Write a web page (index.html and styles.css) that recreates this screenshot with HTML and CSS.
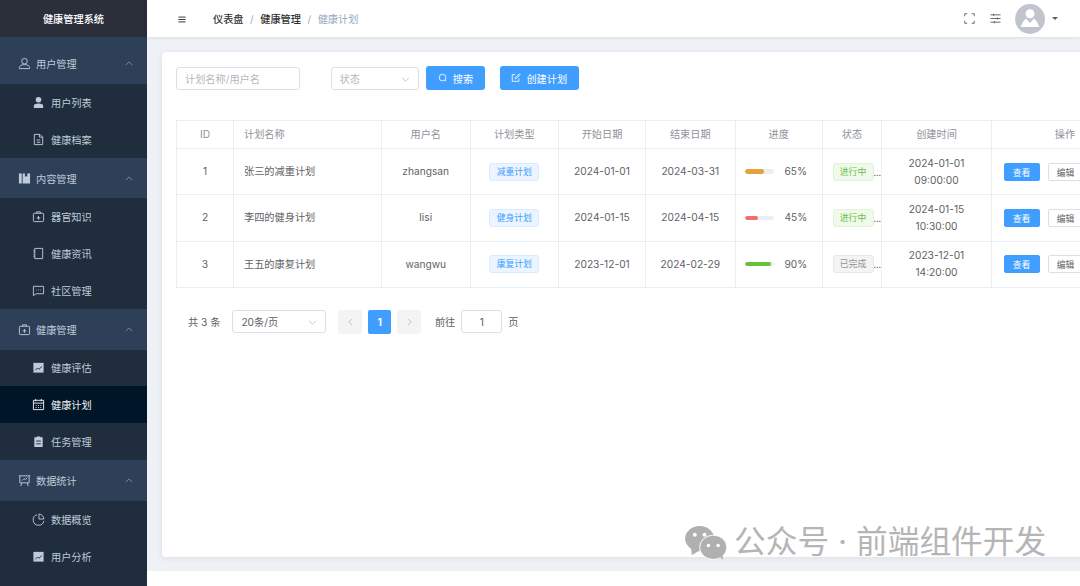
FILE: index.html
```html
<!DOCTYPE html>
<html lang="zh-CN">
<head>
<meta charset="utf-8">
<title>健康计划</title>
<link rel="stylesheet" href="styles.css">
</head>
<body>
<div class="app">
  <aside class="sidebar">
    <div class="brand">健康管理系统</div>
    <nav class="menu">
      <div class="group first">
        <svg class="ico" viewBox="0 0 14 14"><circle cx="7" cy="4.500" r="3"/><path d="M1.500 12.500v-1c0-2 2-3.300 5.500-3.300s5.500 1.300 5.500 3.300v1z"/></svg>
        <span class="label">用户管理</span>
        <svg class="caret" viewBox="0 0 10 6"><path d="M1 5l4-4 4 4"/></svg>
      </div>
      <a class="item"><svg class="ico solid" viewBox="0 0 14 14"><circle cx="7" cy="4" r="3"/><path d="M2 13v-2.500c0-1.500 1.500-2.500 5-2.500s5 1 5 2.500V13z"/></svg>用户列表</a>
      <a class="item"><svg class="ico" viewBox="0 0 14 14"><path d="M2.500 1.500h6l3 3v8h-9zM5 7.500h4M5 10h4M8 1.500v3h3.500"/></svg>健康档案</a>
      <div class="group">
        <svg class="ico solid" viewBox="0 0 14 14"><path d="M1 1.500h3v11H1zM5 1.500h8v11H5z"/><path class="cut" d="M7.500 1h2.500v4.500L8.750 4.300 7.500 5.500z"/></svg>
        <span class="label">内容管理</span>
        <svg class="caret" viewBox="0 0 10 6"><path d="M1 5l4-4 4 4"/></svg>
      </div>
      <a class="item"><svg class="ico" viewBox="0 0 14 14"><rect x="1.500" y="3.500" width="11" height="9" rx="1"/><path d="M5 3.500V2h4v1.500M7 6.500v4M5 8.500h4"/></svg>器官知识</a>
      <a class="item"><svg class="ico" viewBox="0 0 14 14"><path d="M3 1.500h8.500v11H3zM1.500 3.500H3M1.500 5.500H3M1.500 8.500H3M1.500 10.500H3"/></svg>健康资讯</a>
      <a class="item"><svg class="ico" viewBox="0 0 14 14"><path d="M1.500 2.500h11v8h-8l-3 2zM4.500 6.500h.8M6.700 6.500h.8M9 6.500h.8"/></svg>社区管理</a>
      <div class="group">
        <svg class="ico" viewBox="0 0 14 14"><rect x="1.500" y="3.500" width="11" height="9" rx="1"/><path d="M5 3.500V2h4v1.500M7 6.500v4M5 8.500h4"/></svg>
        <span class="label">健康管理</span>
        <svg class="caret" viewBox="0 0 10 6"><path d="M1 5l4-4 4 4"/></svg>
      </div>
      <a class="item"><svg class="ico chart" viewBox="0 0 14 14"><rect x="1.500" y="2" width="11" height="10.500"/><path class="cut-line" d="M3.500 10l2.500-2.500 1.500 1.500 3-3"/></svg>健康评估</a>
      <a class="item active"><svg class="ico" viewBox="0 0 14 14"><path d="M1.500 2.500h11v10h-11zM1.500 5.500h11M4 1v2.500M10 1v2.500M4 8h1M6.500 8h1M9 8h1M4 10.300h1M6.500 10.300h1M9 10.300h1"/></svg>健康计划</a>
      <a class="item"><svg class="ico solid" viewBox="0 0 14 14"><path d="M2.500 2.500h2.500V1.500h4v1h2.500V13h-9z"/><path class="cut-line" d="M4.500 6.500h5M4.500 9.500h5"/></svg>任务管理</a>
      <div class="group">
        <svg class="ico" viewBox="0 0 14 14"><path d="M.8 2h12.400M2 2v7.500h10V2M4 9.500L3 13M10 9.500l1 3.500M4.500 7l2-2 1.500 1 2-2"/></svg>
        <span class="label">数据统计</span>
        <svg class="caret" viewBox="0 0 10 6"><path d="M1 5l4-4 4 4"/></svg>
      </div>
      <a class="item"><svg class="ico" viewBox="0 0 14 14"><path d="M12.800 8.500A5.800 5.800 0 1 1 5.500 1.800M7.500 1.200A5.500 5.500 0 0 1 12.800 6.500H7.500z"/></svg>数据概览</a>
      <a class="item"><svg class="ico chart" viewBox="0 0 14 14"><rect x="1.500" y="2" width="11" height="10.500"/><path class="cut-line" d="M3.500 10l2.500-2.500 1.500 1.500 3-3"/></svg>用户分析</a>
    </nav>
  </aside>

  <div class="right">
    <header class="topbar">
      <svg class="hamburger" viewBox="0 0 10 8"><path d="M.5 1h9M.5 4h9M.5 7h9"/></svg>
      <div class="crumbs">
        <b>仪表盘</b><i>/</i><b>健康管理</b><i>/</i><span>健康计划</span>
      </div>
      <div class="tools">
        <svg class="tool" viewBox="0 0 12 12"><path d="M.8 3.500V.8h2.700M8.500.8h2.700v2.700M.8 8.500v2.700h2.700M11.200 8.500v2.700H8.500"/></svg>
        <svg class="tool" viewBox="0 0 12 12"><path d="M.5 2h11M.5 6h11M.5 10h11M4 .8v2.400M8 4.800v2.400M5 8.800v2.400"/></svg>
        <div class="avatar">
          <svg viewBox="0 0 30 30"><circle cx="15" cy="9.700" r="4.500"/><path d="M5.700 23C7 19 9 16 11 14.500L15 19l4-4.500c2 1.500 4 4.500 5.300 8.500z"/></svg>
        </div>
        <span class="drop"></span>
      </div>
    </header>

    <main class="main">
      <section class="card">
        <div class="filters">
          <div class="input name-input">计划名称/用户名</div>
          <div class="input status-select">状态
            <svg class="chev" viewBox="0 0 10 6"><path d="M1 1l4 4 4-4"/></svg>
          </div>
          <button class="btn search"><svg viewBox="0 0 12 12"><circle cx="5.500" cy="5.500" r="4"/><path d="M8.500 8.500l1.500 1.500"/></svg>搜索</button>
          <button class="btn create"><svg viewBox="0 0 12 12"><path d="M9.500 6.500v3.500h-8V2H5M5 7l.3-1.500L10 1l1 1-4.500 4.500z"/></svg>创建计划</button>
        </div>

        <table class="table">
          <colgroup>
            <col class="c-id"><col class="c-name"><col class="c-user"><col class="c-type"><col class="c-start"><col class="c-end"><col class="c-prog"><col class="c-status"><col class="c-time"><col class="c-op">
          </colgroup>
          <thead>
            <tr><th>ID</th><th class="left">计划名称</th><th>用户名</th><th>计划类型</th><th>开始日期</th><th>结束日期</th><th>进度</th><th>状态</th><th>创建时间</th><th>操作</th></tr>
          </thead>
          <tbody>
            <tr>
              <td>1</td><td class="left">张三的减重计划</td><td>zhangsan</td><td><span class="tag blue">减重计划</span></td><td>2024-01-01</td><td>2024-03-31</td>
              <td class="prog"><div class="pwrap"><div class="track"><div class="fill orange" style="width:65%"></div></div><span>65%</span></div></td>
              <td class="st"><span class="tag green">进行中</span><span class="more">...</span></td>
              <td>2024-01-01<br>09:00:00</td>
              <td class="ops"><button class="mini primary">查看</button><button class="mini">编辑</button></td>
            </tr>
            <tr>
              <td>2</td><td class="left">李四的健身计划</td><td>lisi</td><td><span class="tag blue">健身计划</span></td><td>2024-01-15</td><td>2024-04-15</td>
              <td class="prog"><div class="pwrap"><div class="track"><div class="fill red" style="width:45%"></div></div><span>45%</span></div></td>
              <td class="st"><span class="tag green">进行中</span><span class="more">...</span></td>
              <td>2024-01-15<br>10:30:00</td>
              <td class="ops"><button class="mini primary">查看</button><button class="mini">编辑</button></td>
            </tr>
            <tr>
              <td>3</td><td class="left">王五的康复计划</td><td>wangwu</td><td><span class="tag blue">康复计划</span></td><td>2023-12-01</td><td>2024-02-29</td>
              <td class="prog"><div class="pwrap"><div class="track"><div class="fill lime" style="width:90%"></div></div><span>90%</span></div></td>
              <td class="st"><span class="tag gray">已完成</span><span class="more">...</span></td>
              <td>2023-12-01<br>14:20:00</td>
              <td class="ops"><button class="mini primary">查看</button><button class="mini">编辑</button></td>
            </tr>
          </tbody>
        </table>

        <div class="pager">
          <span>共 3 条</span>
          <div class="input size-select">20条/页
            <svg class="chev" viewBox="0 0 10 6"><path d="M1 1l4 4 4-4"/></svg>
          </div>
          <div class="pages">
            <span class="page"><svg viewBox="0 0 6 10"><path d="M5 1L1 5l4 4"/></svg></span>
            <span class="page on">1</span>
            <span class="page"><svg viewBox="0 0 6 10"><path d="M1 1l4 4-4 4"/></svg></span>
          </div>
          <span class="goto">前往</span>
          <div class="input jump">1</div>
          <span>页</span>
        </div>
      </section>
    </main>
  </div>
</div>

<div class="watermark">
  <svg viewBox="0 0 44 36"><ellipse cx="16" cy="14" rx="15" ry="13"/><path d="M7 23l1 8 8-5z"/><ellipse class="wm-front" cx="30" cy="23" rx="14" ry="12.500"/><path d="M36 32l4 4-.5-7z"/><circle class="wm-eye" cx="11" cy="10" r="2"/><circle class="wm-eye" cx="21" cy="10" r="2"/><circle class="wm-eye" cx="25" cy="21" r="1.800"/><circle class="wm-eye" cx="35" cy="21" r="1.800"/></svg>
  <span>公众号 · 前端组件开发</span>
</div>
</body>
</html>
```
FILE: styles.css
```css
* { box-sizing: border-box; }
html, body { margin: 0; height: 100%; }
body {
  position: relative;
  overflow: hidden;
  background: #fff;
  font-family: Inter, "Noto Sans CJK SC", sans-serif;
  font-size: 10.2px;
  color: #606266;
}
.app { display: flex; height: 586px; }

/* sidebar */
.sidebar { width: 147px; flex: none; background: #1f2d3d; color: #bfcbd9; }
.brand {
  height: 37px;
  background: #2b2f3a;
  color: #fff;
  font-weight: 500;
  display: flex;
  align-items: center;
  justify-content: center;
}
.group {
  height: 40.500px;
  background: #2e4058;
  display: flex;
  align-items: center;
  padding: 0 14px 0 17.500px;
}
.group.first { height: 47px; padding-top: 6px; }
.group .ico { margin-right: 5.500px; }
.label { flex: 1; }
.item {
  height: 36.920px;
  display: flex;
  align-items: center;
  padding-left: 31.500px;
}
.item .ico { margin-right: 6.500px; }
.item.active { background: #001528; color: #f4f4f5; }
.ico {
  width: 13px;
  height: 13px;
  flex: none;
  fill: none;
  stroke: currentColor;
  stroke-width: 1;
}
.ico.solid { fill: currentColor; stroke: none; }
.ico.chart { fill: currentColor; stroke: none; }
.ico .cut { fill: #2e4058; }
.ico .cut-line { fill: none; stroke: #1f2d3d; stroke-width: 1; }
.caret {
  width: 8px;
  height: 5px;
  fill: none;
  stroke: #8a97a8;
  stroke-width: 1;
}

/* top bar */
.right { flex: 1; min-width: 0; display: flex; flex-direction: column; }
.topbar {
  height: 37px;
  flex: none;
  background: #fff;
  display: flex;
  align-items: center;
  padding-left: 31px;
  box-shadow: 0 1px 3px rgba(0, 21, 41, .08);
  position: relative;
}
.hamburger { width: 8px; height: 7px; fill: none; stroke: #303133; stroke-width: 1.200; margin-top: 2px; }
.crumbs { margin-left: 27px; display: flex; align-items: center; }
.crumbs b { font-weight: 500; color: #303133; }
.crumbs i { font-style: normal; color: #a8abb2; margin: 0 6.500px; }
.crumbs span { color: #97a8be; }
.tools { margin-left: auto; display: flex; align-items: center; padding-right: 22px; }
.tool { width: 11px; height: 11px; fill: none; stroke: #5a5e66; stroke-width: 1; margin-right: 15px; }
.tool + .tool { margin-right: 14px; }
.avatar { width: 30px; height: 30px; border-radius: 50%; background: #c0c4cc; }
.avatar svg { display: block; width: 30px; height: 30px; fill: #fff; }
.drop {
  margin-left: 7px;
  width: 0;
  height: 0;
  border-left: 3px solid transparent;
  border-right: 3px solid transparent;
  border-top: 3.500px solid #5a5e66;
}

/* main */
.main {
  height: 534px;
  flex: none;
  background: #eef1f5;
  padding: 15px 0 14px 15px;
  overflow: hidden;
}
.card {
  width: 1000px;
  height: 505px;
  background: #fff;
  border-radius: 4px;
  box-shadow: 0 1px 6px rgba(0, 0, 0, .08);
  padding: 14px;
}
.filters { display: flex; align-items: center; height: 24px; }
.input {
  height: 23px;
  border: 1px solid #dcdfe6;
  border-radius: 3px;
  display: flex;
  align-items: center;
  position: relative;
  background: #fff;
}
.name-input { width: 123.500px; padding-left: 8px; color: #b4b7bd; }
.status-select { width: 88px; margin-left: 31px; padding-left: 8px; color: #b4b7bd; }
.chev {
  position: absolute;
  right: 8px;
  top: 9px;
  width: 9px;
  height: 5px;
  fill: none;
  stroke: #b4b7bd;
  stroke-width: 1;
}
.btn {
  height: 24px;
  border: 0;
  border-radius: 3px;
  background: #409eff;
  color: #fff;
  font: inherit;
  display: flex;
  align-items: center;
  justify-content: center;
  padding: 0;
}
.btn svg { width: 10px; height: 10px; margin-right: 5px; fill: none; stroke: #fff; stroke-width: 1; }
.search { width: 59px; margin-left: 7.500px; }
.create { width: 79.500px; margin-left: 14.500px; }

/* table */
.table {
  margin-top: 30px;
  table-layout: fixed;
  border-collapse: collapse;
  width: 961px;
}
.c-id { width: 57px; }
.c-name { width: 148px; }
.c-user { width: 88.500px; }
.c-type { width: 88.500px; }
.c-start { width: 87px; }
.c-end { width: 89.500px; }
.c-prog { width: 87.500px; }
.c-status { width: 59px; }
.c-time { width: 110px; }
.c-op { width: 147px; }
.table th, .table td {
  border: 1px solid #ebeef5;
  text-align: center;
  padding: 0;
  line-height: 17px;
  white-space: nowrap;
  overflow: hidden;
}
.table th { height: 28px; font-weight: 400; color: #909399; }
.table td { height: 46.300px; }
.table .left { text-align: left; padding-left: 10px; }
.tag {
  display: inline-block;
  height: 18px;
  line-height: 16px;
  border: 1px solid;
  border-radius: 3px;
  font-size: 8.800px;
  text-align: center;
  vertical-align: middle;
}
.tag.blue { width: 50px; color: #409eff; background: #ecf5ff; border-color: #d9ecff; }
.tag.green { width: 41px; color: #67c23a; background: #f0f9eb; border-color: #e1f3d8; }
.tag.gray { width: 41px; color: #909399; background: #f4f4f5; border-color: #e9e9eb; }
.table .st { text-align: left; padding-left: 9.500px; }
.more { font-size: 8.800px; vertical-align: middle; }
.pwrap { display: flex; align-items: center; padding-left: 9px; }
.track { width: 29.500px; height: 4.500px; border-radius: 3px; background: #ebeef5; overflow: hidden; }
.fill { height: 100%; border-radius: 3px; }
.fill.orange { background: #e6a23c; }
.fill.red { background: #f56c6c; }
.fill.lime { background: #67c23a; }
.pwrap span { margin-left: 10.500px; }
.table .ops { text-align: left; padding-left: 11.500px; }
.mini {
  width: 36px;
  height: 18px;
  padding: 0;
  border: 1px solid #dcdfe6;
  border-radius: 2px;
  background: #fff;
  color: #606266;
  font: inherit;
  font-size: 8.800px;
  margin-right: 8px;
  vertical-align: middle;
}
.mini.primary { background: #409eff; border-color: #409eff; color: #fff; }

/* pager */
.pager { display: flex; align-items: center; height: 24px; margin-top: 22px; padding-left: 12px; }
.size-select { width: 94px; margin-left: 12px; padding-left: 8px; color: #606266; }
.pages { display: flex; gap: 6px; margin-left: 12px; }
.page {
  width: 23.500px;
  height: 23.500px;
  border-radius: 2px;
  background: #f4f4f5;
  display: flex;
  align-items: center;
  justify-content: center;
  font-weight: 700;
}
.page svg { width: 5px; height: 8px; fill: none; stroke: #b4b7bd; stroke-width: 1; }
.page.on { background: #409eff; color: #fff; }
.goto { margin-left: 14px; }
.jump { width: 41px; margin: 0 6px 0 6px; justify-content: center; }

/* watermark over the page */
.watermark {
  position: absolute;
  left: 684px;
  top: 520px;
  display: flex;
  align-items: center;
  color: #b5b5b5;
  font-size: 31.700px;
  line-height: 44px;
  white-space: nowrap;
}
.watermark svg { width: 43px; height: 35px; margin-right: 7px; fill: #b0b0b0; flex: none; }
.wm-front { stroke: #fff; stroke-width: 1; }
.wm-eye { fill: #fff; }
```
